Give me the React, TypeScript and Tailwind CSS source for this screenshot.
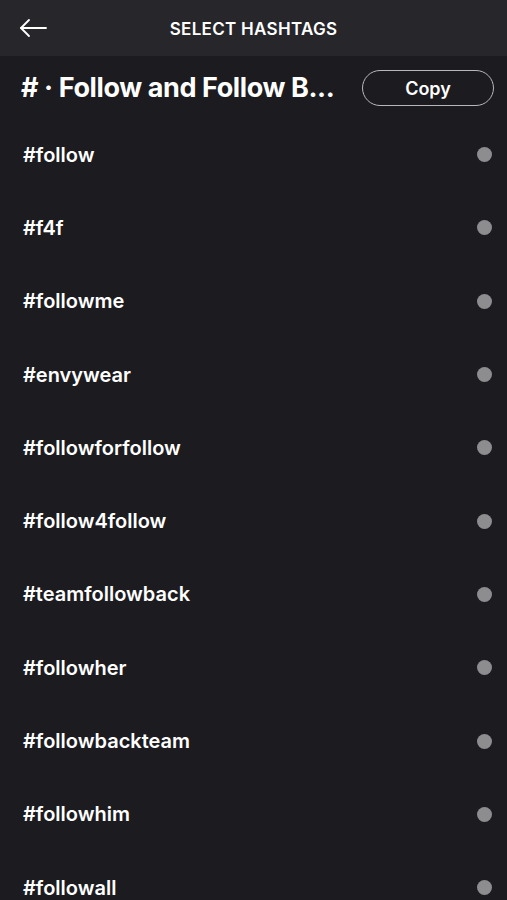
const tags = [
  "#follow",
  "#f4f",
  "#followme",
  "#envywear",
  "#followforfollow",
  "#follow4follow",
  "#teamfollowback",
  "#followher",
  "#followbackteam",
  "#followhim",
  "#followall",
];

export default function App() {
  return (
    <div className="h-[900px] overflow-hidden bg-[#1c1b20] text-white font-['Inter',sans-serif]">
      <header className="relative flex h-14 items-center justify-center bg-[#27262b] pt-[3px]">
        <button className="absolute left-[18px] top-[17px] text-white">
          <svg width="30" height="22" viewBox="0 0 30 22" fill="none" stroke="currentColor" strokeWidth="1.8" strokeLinecap="round" strokeLinejoin="round">
            <path d="M28 11H3" />
            <path d="M11 3L3 11l8 8" />
          </svg>
        </button>
        <h1 className="text-[17px] font-semibold tracking-[0.3px]">SELECT HASHTAGS</h1>
      </header>

      <div className="flex h-[62px] items-center justify-between pl-[21px] pr-[13px] pt-[2px]">
        <h2 className="text-[27px] font-bold tracking-[-0.4px]">#&nbsp;·&nbsp;Follow and Follow B...</h2>
        <button className="flex h-[36px] w-[132px] items-center justify-center rounded-full border-[1.5px] border-[#b8b8bb] text-[18px] font-semibold">
          Copy
        </button>
      </div>

      <ul>
        {tags.map((tag) => (
          <li key={tag} className="flex h-[73.3px] items-center justify-between pl-[23px] pr-[15px]">
            <span className="text-[20px] font-semibold">{tag}</span>
            <span className="h-[15px] w-[15px] rounded-full bg-[#8d8d90]" />
          </li>
        ))}
      </ul>
    </div>
  );
}
